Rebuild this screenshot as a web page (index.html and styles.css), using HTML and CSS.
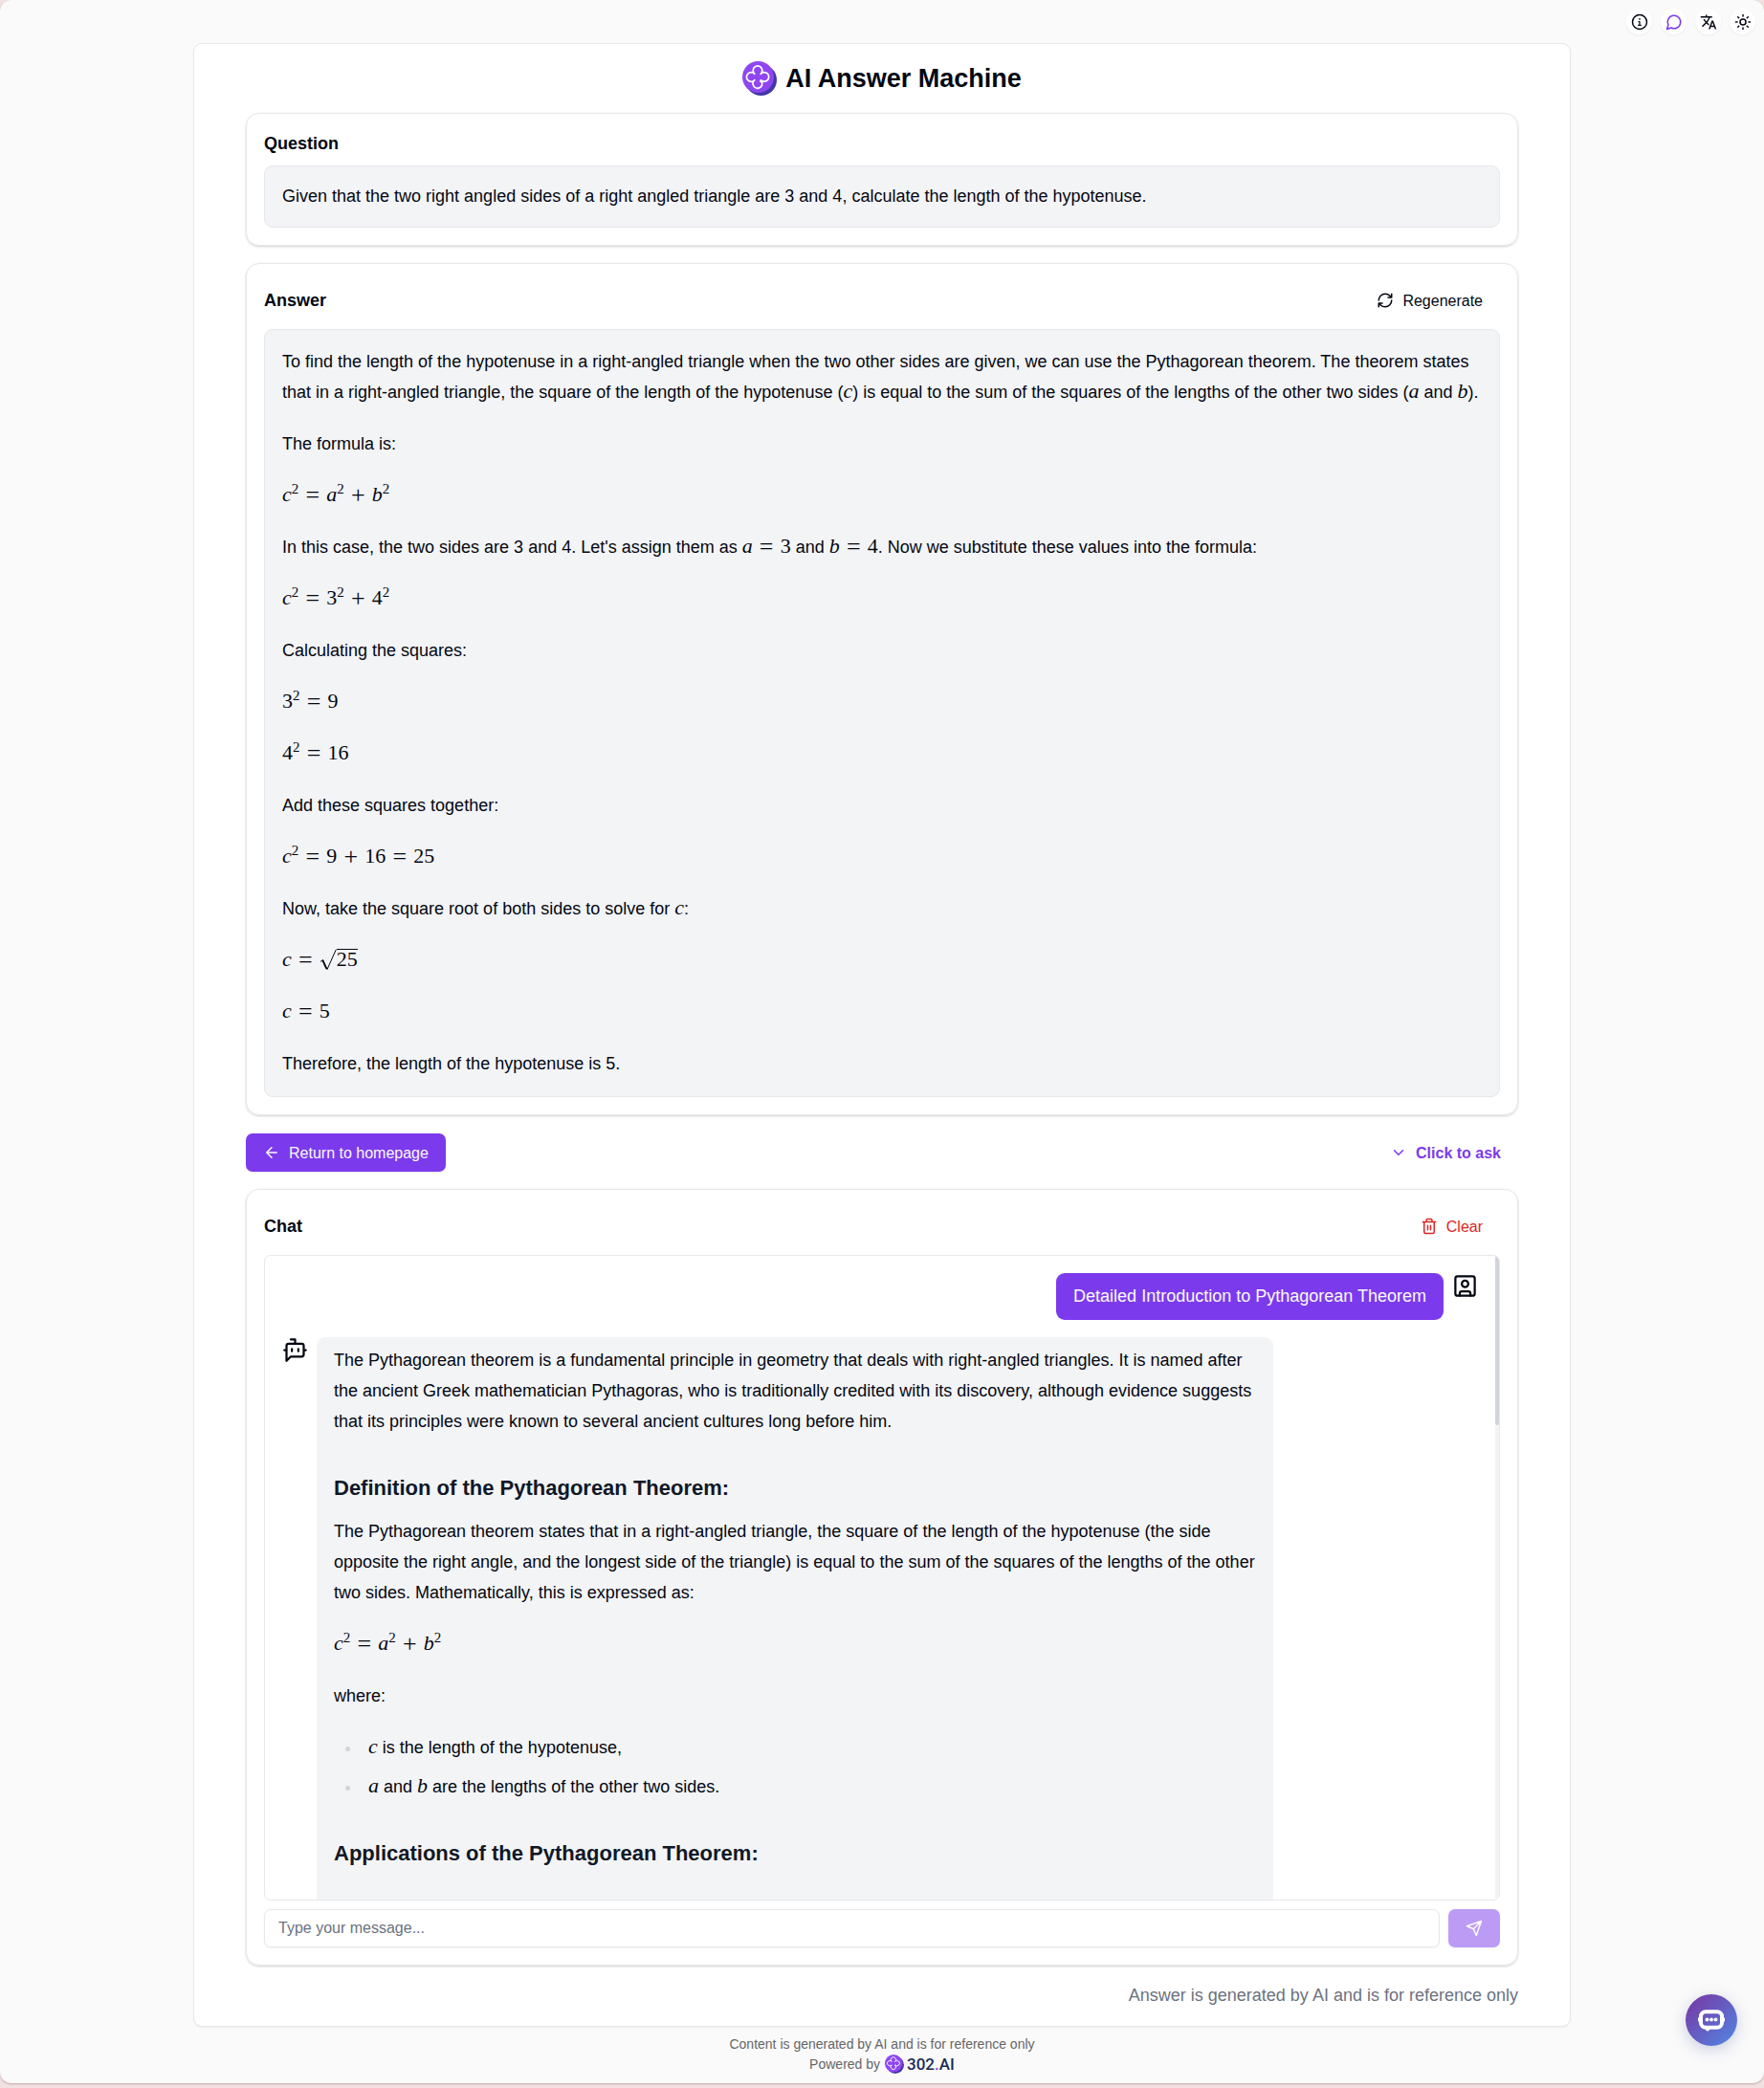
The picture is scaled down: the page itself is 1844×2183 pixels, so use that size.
FILE: index.html
```html
<!DOCTYPE html>
<html lang="en">
<head>
<meta charset="utf-8">
<meta name="viewport" content="width=device-width, initial-scale=1">
<title>AI Answer Machine</title>
<link rel="stylesheet" href="styles.css">
</head>
<body>
<svg class="defs" aria-hidden="true">
  <symbol id="logo" viewBox="0 0 36 36">
    <circle cx="19.6" cy="19.6" r="16.4" fill="#4338a8"/>
    <circle cx="16.5" cy="16.5" r="16.5" fill="#8f46f0"/>
    <path d="M19 19.2 A4.8 4.8 0 1 0 19.2 13.3 A4.8 4.8 0 1 0 12.8 13.3 A4.8 4.8 0 1 0 12.8 19.7 A4.8 4.8 0 1 0 20.6 22.4 L18.2 20.4" fill="none" stroke="#fff" stroke-width="1.7" stroke-linejoin="round"/>
  </symbol>
</svg>
<div class="shell">
  <header class="toolbar">
    <button class="round" type="button" aria-label="About">
      <svg class="icon" viewBox="0 0 24 24"><circle cx="12" cy="12" r="10"/><path d="M12 7v1.5M10.6 11.5H12V16.5M10.2 16.5h3.6" stroke-width="1.6"/></svg>
    </button>
    <button class="round accent" type="button" aria-label="Chat">
      <svg class="icon" viewBox="0 0 24 24"><path d="M7.9 20A9 9 0 1 0 4 16.1L2 22Z"/></svg>
    </button>
    <button class="round" type="button" aria-label="Language">
      <svg class="icon solid" viewBox="0 0 24 24"><path d="M12.87 15.07l-2.54-2.51.03-.03c1.74-1.94 2.98-4.17 3.71-6.53H17V4h-7V2H8v2H1v1.99h11.17C11.5 7.92 10.44 9.75 9 11.35 8.07 10.32 7.3 9.19 6.69 8h-2c.73 1.63 1.73 3.17 2.98 4.56l-5.09 5.02L4 19l5-5 3.11 3.11.76-2.04zM18.5 10h-2L12 22h2l1.12-3h4.75L21 22h2l-4.5-12zm-2.62 7l1.62-4.33L19.12 17h-3.24z"/></svg>
    </button>
    <button class="round" type="button" aria-label="Theme">
      <svg class="icon" viewBox="0 0 24 24"><circle cx="12" cy="12" r="4"/><path d="M12 2v2M12 20v2M4.93 4.93l1.41 1.41M17.66 17.66l1.41 1.41M2 12h2M20 12h2M6.34 17.66l-1.41 1.41M19.07 4.93l-1.41 1.41"/></svg>
    </button>
  </header>

  <main class="panel">
    <div class="brand">
      <svg class="brand-logo" aria-hidden="true"><use href="#logo"/></svg>
      <h1>AI Answer Machine</h1>
    </div>

    <section class="card">
      <h2>Question</h2>
      <div class="box">Given that the two right angled sides of a right angled triangle are 3 and 4, calculate the length of the hypotenuse.</div>
    </section>

    <section class="card">
      <div class="card-head">
        <h2>Answer</h2>
        <button class="btn" type="button">
          <svg class="icon" viewBox="0 0 24 24"><path d="M3 12a9 9 0 0 1 9-9 9.75 9.75 0 0 1 6.74 2.74L21 8M21 3v5h-5M21 12a9 9 0 0 1-9 9 9.75 9.75 0 0 1-6.74-2.74L3 16M8 16H3v5"/></svg>
          Regenerate
        </button>
      </div>
      <div class="box answer prose">
        <p>To find the length of the hypotenuse in a right-angled triangle when the two other sides are given, we can use the Pythagorean theorem. The theorem states that in a right-angled triangle, the square of the length of the hypotenuse (<span class="math"><i>c</i></span>) is equal to the sum of the squares of the lengths of the other two sides (<span class="math"><i>a</i></span> and <span class="math"><i>b</i></span>).</p>
        <p>The formula is:</p>
        <p><span class="math"><i>c</i><sup>2</sup><b>=</b><i>a</i><sup>2</sup><b>+</b><i>b</i><sup>2</sup></span></p>
        <p>In this case, the two sides are 3 and 4. Let's assign them as <span class="math"><i>a</i><b>=</b>3</span> and <span class="math"><i>b</i><b>=</b>4</span>. Now we substitute these values into the formula:</p>
        <p><span class="math"><i>c</i><sup>2</sup><b>=</b>3<sup>2</sup><b>+</b>4<sup>2</sup></span></p>
        <p>Calculating the squares:</p>
        <p><span class="math">3<sup>2</sup><b>=</b>9</span></p>
        <p><span class="math">4<sup>2</sup><b>=</b>16</span></p>
        <p>Add these squares together:</p>
        <p><span class="math"><i>c</i><sup>2</sup><b>=</b>9<b>+</b>16<b>=</b>25</span></p>
        <p>Now, take the square root of both sides to solve for <span class="math"><i>c</i></span>:</p>
        <p><span class="math"><i>c</i><b>=</b><svg class="radical" viewBox="0 0 18 23" role="img" aria-label="square root of"><path d="M1 13.5L3.5 11.5L8 21.5L17.3 .8" fill="none" stroke="currentColor" stroke-width="1"/><path d="M3.2 11.8L7.4 21" stroke="currentColor" stroke-width="1.8"/></svg><span class="radicand">25</span></span></p>
        <p><span class="math"><i>c</i><b>=</b>5</span></p>
        <p>Therefore, the length of the hypotenuse is 5.</p>
      </div>
    </section>

    <div class="actions">
      <button class="btn primary" type="button">
        <svg class="icon" viewBox="0 0 24 24"><path d="m12 19-7-7 7-7M19 12H5"/></svg>
        Return to homepage
      </button>
      <button class="btn ask" type="button">
        <svg class="icon" viewBox="0 0 24 24"><path d="m6 9 6 6 6-6"/></svg>
        Click to ask
      </button>
    </div>

    <section class="card">
      <div class="card-head">
        <h2>Chat</h2>
        <button class="btn danger" type="button">
          <svg class="icon" viewBox="0 0 24 24"><path d="M3 6h18M19 6v14c0 1-1 2-2 2H7c-1 0-2-1-2-2V6M8 6V4c0-1 1-2 2-2h4c1 0 2 1 2 2v2M10 11v6M14 11v6"/></svg>
          Clear
        </button>
      </div>
      <div class="chat">
        <div class="messages">
          <div class="message mine">
            <div class="bubble">Detailed Introduction to Pythagorean Theorem</div>
            <svg class="icon avatar" viewBox="0 0 24 24"><rect x="3" y="3" width="18" height="18" rx="2"/><circle cx="12" cy="10" r="3"/><path d="M7 21v-2a2 2 0 0 1 2-2h6a2 2 0 0 1 2 2v2"/></svg>
          </div>
          <div class="message">
            <svg class="icon avatar" viewBox="0 0 24 24"><path d="M12 6V2H8M8 18l-4 4V8a2 2 0 0 1 2-2h12a2 2 0 0 1 2 2v8a2 2 0 0 1-2 2ZM2 12h2M9 11v2M15 11v2M20 12h2"/></svg>
            <div class="bubble reply prose">
              <p>The Pythagorean theorem is a fundamental principle in geometry that deals with right-angled triangles. It is named after the ancient Greek mathematician Pythagoras, who is traditionally credited with its discovery, although evidence suggests that its principles were known to several ancient cultures long before him.</p>
              <h3>Definition of the Pythagorean Theorem:</h3>
              <p>The Pythagorean theorem states that in a right-angled triangle, the square of the length of the hypotenuse (the side opposite the right angle, and the longest side of the triangle) is equal to the sum of the squares of the lengths of the other two sides. Mathematically, this is expressed as:</p>
              <p><span class="math"><i>c</i><sup>2</sup><b>=</b><i>a</i><sup>2</sup><b>+</b><i>b</i><sup>2</sup></span></p>
              <p>where:</p>
              <ul>
                <li><span class="math"><i>c</i></span> is the length of the hypotenuse,</li>
                <li><span class="math"><i>a</i></span> and <span class="math"><i>b</i></span> are the lengths of the other two sides.</li>
              </ul>
              <h3>Applications of the Pythagorean Theorem:</h3>
            </div>
          </div>
        </div>
        <div class="track"><div class="thumb"></div></div>
      </div>
      <form class="composer">
        <input type="text" placeholder="Type your message..." aria-label="Message">
        <button class="btn primary send" type="submit" aria-label="Send" disabled>
          <svg class="icon" viewBox="0 0 24 24"><path d="m22 2-7 20-4-9-9-4ZM22 2 11 13"/></svg>
        </button>
      </form>
    </section>

    <p class="note">Answer is generated by AI and is for reference only</p>
  </main>

  <footer class="footer">
    <div>Content is generated by AI and is for reference only</div>
    <div class="powered">Powered by
      <a href="#"><svg class="small-logo" aria-hidden="true"><use href="#logo"/></svg><span>302<em>.</em>AI</span></a>
    </div>
  </footer>
</div>
<button class="fab" type="button" aria-label="Open support chat">
  <svg viewBox="0 0 28 24"><path d="M8 3.2h12a5 5 0 0 1 5 5v6.6a5 5 0 0 1-5 5h-8.5l-1.5 1.7v-1.7H8a5 5 0 0 1-5-5V8.2a5 5 0 0 1 5-5Z" fill="none" stroke="#fff" stroke-width="4" stroke-linejoin="round"/><path d="M.5 9.500v4M27.500 9.500v4" stroke="#fff"/><circle cx="9.500" cy="11.500" r="1.900" fill="#fff"/><circle cx="14" cy="11.500" r="1.900" fill="#fff"/><circle cx="18.500" cy="11.500" r="1.900" fill="#fff"/></svg>
</button>
</body>
</html>
```
FILE: styles.css
```css
* { box-sizing: border-box; }

body {
  margin: 0;
  padding-bottom: 5px;
  background: #f2e1e1;
  color: #030712;
  font: 18px/27px "Liberation Sans", Arial, sans-serif;
}

h1, h2, h3, p, ul { margin: 0; }

button, input { font: inherit; color: inherit; }

.defs { position: absolute; width: 0; height: 0; }

.shell {
  background: #fafafa;
  border-radius: 12px;
  box-shadow: 0 1px 2px rgba(80, 40, 40, 0.3);
}

.icon {
  flex: none;
  width: 18px;
  height: 18px;
  fill: none;
  stroke: currentColor;
  stroke-width: 2;
  stroke-linecap: round;
  stroke-linejoin: round;
}

.icon.solid { fill: currentColor; stroke: none; }

.toolbar {
  display: flex;
  justify-content: flex-end;
  gap: 9px;
  padding: 9px;
}

.round {
  display: flex;
  align-items: center;
  justify-content: center;
  width: 27px;
  height: 27px;
  padding: 0;
  border: 0;
  border-radius: 50%;
  background: #fff;
  box-shadow: 0 1px 3px rgba(0, 0, 0, 0.06);
}

.accent { color: #7c3aed; }

.panel {
  display: flex;
  flex-direction: column;
  gap: 18px;
  max-width: 1440px;
  margin: 0 auto;
  padding: 18px 54px;
  border: 1px solid #e5e7eb;
  border-radius: 9px;
  background: #fff;
  box-shadow: 0 1px 2px rgba(0, 0, 0, 0.05);
}

.brand {
  display: flex;
  align-items: center;
  justify-content: center;
  gap: 9px;
}

.brand-logo { width: 36px; height: 36px; }

h1 { font-size: 27px; line-height: 36px; }

.card {
  display: flex;
  flex-direction: column;
  gap: 9px;
  padding: 18px;
  border: 1px solid #e5e7eb;
  border-radius: 14px;
  box-shadow: 0 1px 3px rgba(0, 0, 0, 0.1), 0 1px 2px rgba(0, 0, 0, 0.08);
}

h2 { font-size: 18px; line-height: 27px; }

.card-head, .actions {
  display: flex;
  align-items: center;
  justify-content: space-between;
  min-height: 41px;
}

.card-head { align-items: flex-start; }

.card-head h2 { line-height: 40px; }

.actions { align-items: flex-end; }

.box {
  padding: 18px;
  border: 1px solid #e5e7eb;
  border-radius: 9px;
  background: #f3f4f6;
  line-height: 27px;
}

.btn {
  display: flex;
  align-items: center;
  justify-content: center;
  gap: 9px;
  height: 40px;
  padding: 0 18px;
  border: 0;
  border-radius: 7px;
  background: transparent;
  font-size: 16px;
}

.primary {
  background: #7c3aed;
  color: #f9fafb;
  box-shadow: 0 1px 2px rgba(0, 0, 0, 0.1);
}

.ask { color: #7c3aed; font-weight: bold; }

.danger { color: #dc2626; }

.prose { line-height: 32px; }

.answer { padding-top: 17px; }

.prose p + p, .prose p + ul { margin-top: 22px; }

.prose h3 {
  margin: 36px 0 11px;
  color: #111827;
  font-size: 22px;
  line-height: 36px;
}

.prose ul { padding-left: 29px; }

.prose li { padding-left: 7px; }

.prose li + li { margin-top: 9px; }

.prose li::marker { color: #d1d5db; }

.math {
  font: 22px/1 "Liberation Serif", "Times New Roman", serif;
  white-space: nowrap;
}

.math sup {
  font-size: 15px;
  line-height: 0;
  vertical-align: 8px;
}

.math b {
  display: inline-block;
  width: 17px;
  margin: 0 6px;
  font-size: 26px;
  font-weight: normal;
  line-height: 20px;
  text-align: center;
  vertical-align: -2px;
}

.radical { width: 18px; height: 23px; vertical-align: -5px; }

.radicand { display: inline-block; border-top: 1px solid; line-height: 20px; }

.chat {
  display: flex;
  height: 675px;
  border: 1px solid #e5e7eb;
  border-radius: 7px;
  overflow: hidden;
}

.messages {
  display: flex;
  flex: 1;
  flex-direction: column;
  gap: 18px;
  padding: 18px;
  overflow: hidden;
}

.message {
  display: flex;
  flex: none;
  align-items: flex-start;
  gap: 9px;
}

.mine { justify-content: flex-end; }

.avatar { width: 27px; height: 27px; }

.bubble {
  max-width: 80%;
  padding: 9px 18px;
  border-radius: 9px;
  background: #f3f4f6;
}

.reply { padding: 8px 18px 45px; }

.mine .bubble {
  background: #7c3aed;
  color: #f9fafb;
  line-height: 31px;
}

.track { width: 4px; background: #f3f4f6; }

.thumb { height: 177px; border-radius: 2px; background: #d1d5db; }

.composer { display: flex; gap: 9px; }

.composer input {
  flex: 1;
  min-width: 0;
  height: 40px;
  padding: 0 14px;
  border: 1px solid #e5e7eb;
  border-radius: 7px;
  background: #fff;
  box-shadow: 0 1px 2px rgba(0, 0, 0, 0.05);
  font-size: 16px;
}

.composer input::placeholder { color: #6b7280; }

.send { width: 54px; padding: 0; opacity: 0.5; }

.note { color: #6b7280; text-align: right; }

.footer {
  padding: 8px 9px 9px;
  color: #666;
  font-size: 14px;
  line-height: 20px;
  text-align: center;
}

.powered, .powered a {
  display: flex;
  align-items: center;
  justify-content: center;
}

.powered { gap: 5px; line-height: 22px; }

.powered a {
  gap: 3px;
  color: #1b2a55;
  font: 500 17px/22px Roboto, sans-serif;
  text-decoration: none;
}

.powered em { color: #8f46f0; font-style: normal; }

.small-logo { width: 20px; height: 20px; }

.fab {
  position: fixed;
  right: 28px;
  bottom: 44px;
  display: flex;
  align-items: center;
  justify-content: center;
  width: 54px;
  height: 54px;
  padding: 0;
  border: 0;
  border-radius: 50%;
  background: linear-gradient(135deg, #7a34a0, #5088e4);
  box-shadow: 0 4px 16px rgba(60, 80, 160, 0.25);
}

.fab svg { width: 28px; height: 24px; }
```
